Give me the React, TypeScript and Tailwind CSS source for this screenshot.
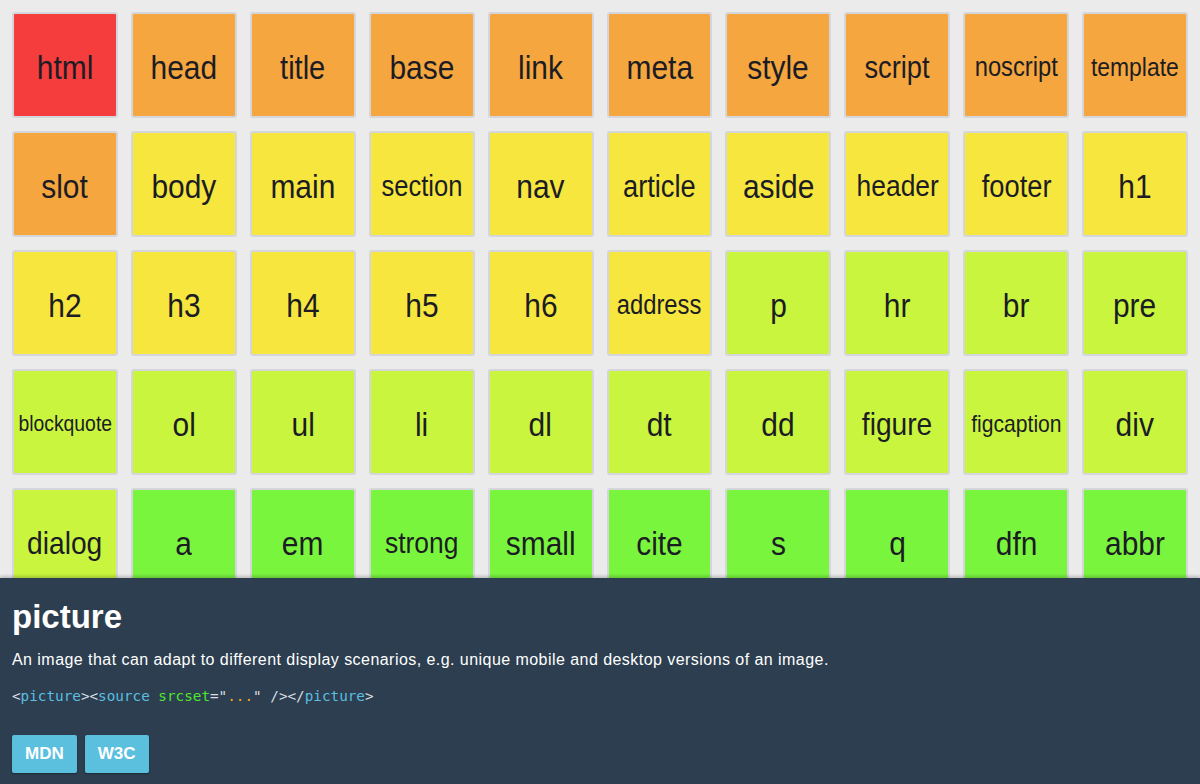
const RED = "bg-[#f53d3d]";
const ORANGE = "bg-[#f5a63e]";
const YELLOW = "bg-[#f6e63e]";
const LIME = "bg-[#c9f53e]";
const GREEN = "bg-[#7af53e]";

type Tag = { name: string; bg: string; size: string };

const tags: Tag[] = [
  { name: "html", bg: RED, size: "text-[34px]" },
  { name: "head", bg: ORANGE, size: "text-[34px]" },
  { name: "title", bg: ORANGE, size: "text-[33px]" },
  { name: "base", bg: ORANGE, size: "text-[34px]" },
  { name: "link", bg: ORANGE, size: "text-[34px]" },
  { name: "meta", bg: ORANGE, size: "text-[34px]" },
  { name: "style", bg: ORANGE, size: "text-[34px]" },
  { name: "script", bg: ORANGE, size: "text-[31px]" },
  { name: "noscript", bg: ORANGE, size: "text-[27px]" },
  { name: "template", bg: ORANGE, size: "text-[26px]" },

  { name: "slot", bg: ORANGE, size: "text-[34px]" },
  { name: "body", bg: YELLOW, size: "text-[34px]" },
  { name: "main", bg: YELLOW, size: "text-[34px]" },
  { name: "section", bg: YELLOW, size: "text-[29px]" },
  { name: "nav", bg: YELLOW, size: "text-[34px]" },
  { name: "article", bg: YELLOW, size: "text-[31px]" },
  { name: "aside", bg: YELLOW, size: "text-[34px]" },
  { name: "header", bg: YELLOW, size: "text-[30px]" },
  { name: "footer", bg: YELLOW, size: "text-[31px]" },
  { name: "h1", bg: YELLOW, size: "text-[34px]" },

  { name: "h2", bg: YELLOW, size: "text-[34px]" },
  { name: "h3", bg: YELLOW, size: "text-[34px]" },
  { name: "h4", bg: YELLOW, size: "text-[34px]" },
  { name: "h5", bg: YELLOW, size: "text-[34px]" },
  { name: "h6", bg: YELLOW, size: "text-[34px]" },
  { name: "address", bg: YELLOW, size: "text-[27px]" },
  { name: "p", bg: LIME, size: "text-[34px]" },
  { name: "hr", bg: LIME, size: "text-[34px]" },
  { name: "br", bg: LIME, size: "text-[34px]" },
  { name: "pre", bg: LIME, size: "text-[34px]" },

  { name: "blockquote", bg: LIME, size: "text-[22px]" },
  { name: "ol", bg: LIME, size: "text-[34px]" },
  { name: "ul", bg: LIME, size: "text-[34px]" },
  { name: "li", bg: LIME, size: "text-[34px]" },
  { name: "dl", bg: LIME, size: "text-[34px]" },
  { name: "dt", bg: LIME, size: "text-[34px]" },
  { name: "dd", bg: LIME, size: "text-[34px]" },
  { name: "figure", bg: LIME, size: "text-[32px]" },
  { name: "figcaption", bg: LIME, size: "text-[24px]" },
  { name: "div", bg: LIME, size: "text-[34px]" },

  { name: "dialog", bg: LIME, size: "text-[32px]" },
  { name: "a", bg: GREEN, size: "text-[34px]" },
  { name: "em", bg: GREEN, size: "text-[34px]" },
  { name: "strong", bg: GREEN, size: "text-[30px]" },
  { name: "small", bg: GREEN, size: "text-[34px]" },
  { name: "cite", bg: GREEN, size: "text-[34px]" },
  { name: "s", bg: GREEN, size: "text-[34px]" },
  { name: "q", bg: GREEN, size: "text-[34px]" },
  { name: "dfn", bg: GREEN, size: "text-[34px]" },
  { name: "abbr", bg: GREEN, size: "text-[34px]" },
];

const Tile = ({ tag }: { tag: Tag }) => (
  <div
    className={`${tag.bg} h-[106px] flex items-center justify-center pt-[4px] border-2 border-[#d5d5dc] rounded-[3px] text-[#1c1c24] font-['Liberation_Sans',Arial,sans-serif] leading-none`}
  >
    <span className={`${tag.size} inline-block scale-x-[0.88] whitespace-nowrap`}>
      {tag.name}
    </span>
  </div>
);

const App = () => {
  return (
    <div className="relative h-screen overflow-hidden bg-[#ebebeb]">
      {/* Element grid */}
      <div className="grid grid-cols-10 gap-[13px] pl-[12px] pr-[12px] pt-[12px]">
        {tags.map((tag) => (
          <Tile key={tag.name} tag={tag} />
        ))}
      </div>

      {/* Detail panel */}
      <div className="absolute bottom-0 left-0 right-0 h-[206px] bg-[#2c3e50] shadow-[0_-2px_3px_rgba(0,0,0,0.2)] px-[12px] pt-[20px] font-['Liberation_Sans',Arial,sans-serif] text-white">
        <h2 className="text-[33px] font-bold leading-[38px]">picture</h2>
        <p className="mt-[15px] text-[16px] tracking-[0.45px] leading-[18px]">
          An image that can adapt to different display scenarios, e.g. unique mobile and desktop
          versions of an image.
        </p>
        <pre className="mt-[19px] text-[14.3px] leading-[17px] font-['DejaVu_Sans_Mono',monospace] text-[#d8dde2]">
          &lt;<span className="text-[#5bbfe0]">picture</span>&gt;&lt;
          <span className="text-[#5bbfe0]">source</span>{" "}
          <span className="text-[#4ee62e]">srcset</span>="
          <span className="text-[#f0a818]">...</span>" /&gt;&lt;/
          <span className="text-[#5bbfe0]">picture</span>&gt;
        </pre>
        <div className="mt-[30px] flex gap-[8px]">
          <button className="h-[38px] px-[13px] rounded-[2px] bg-[#5bc0de] text-white font-bold text-[17px] shadow-[0_1px_2px_rgba(0,0,0,0.35)]">
            MDN
          </button>
          <button className="h-[38px] px-[13px] rounded-[2px] bg-[#5bc0de] text-white font-bold text-[17px] shadow-[0_1px_2px_rgba(0,0,0,0.35)]">
            W3C
          </button>
        </div>
      </div>
    </div>
  );
};

export default App;
